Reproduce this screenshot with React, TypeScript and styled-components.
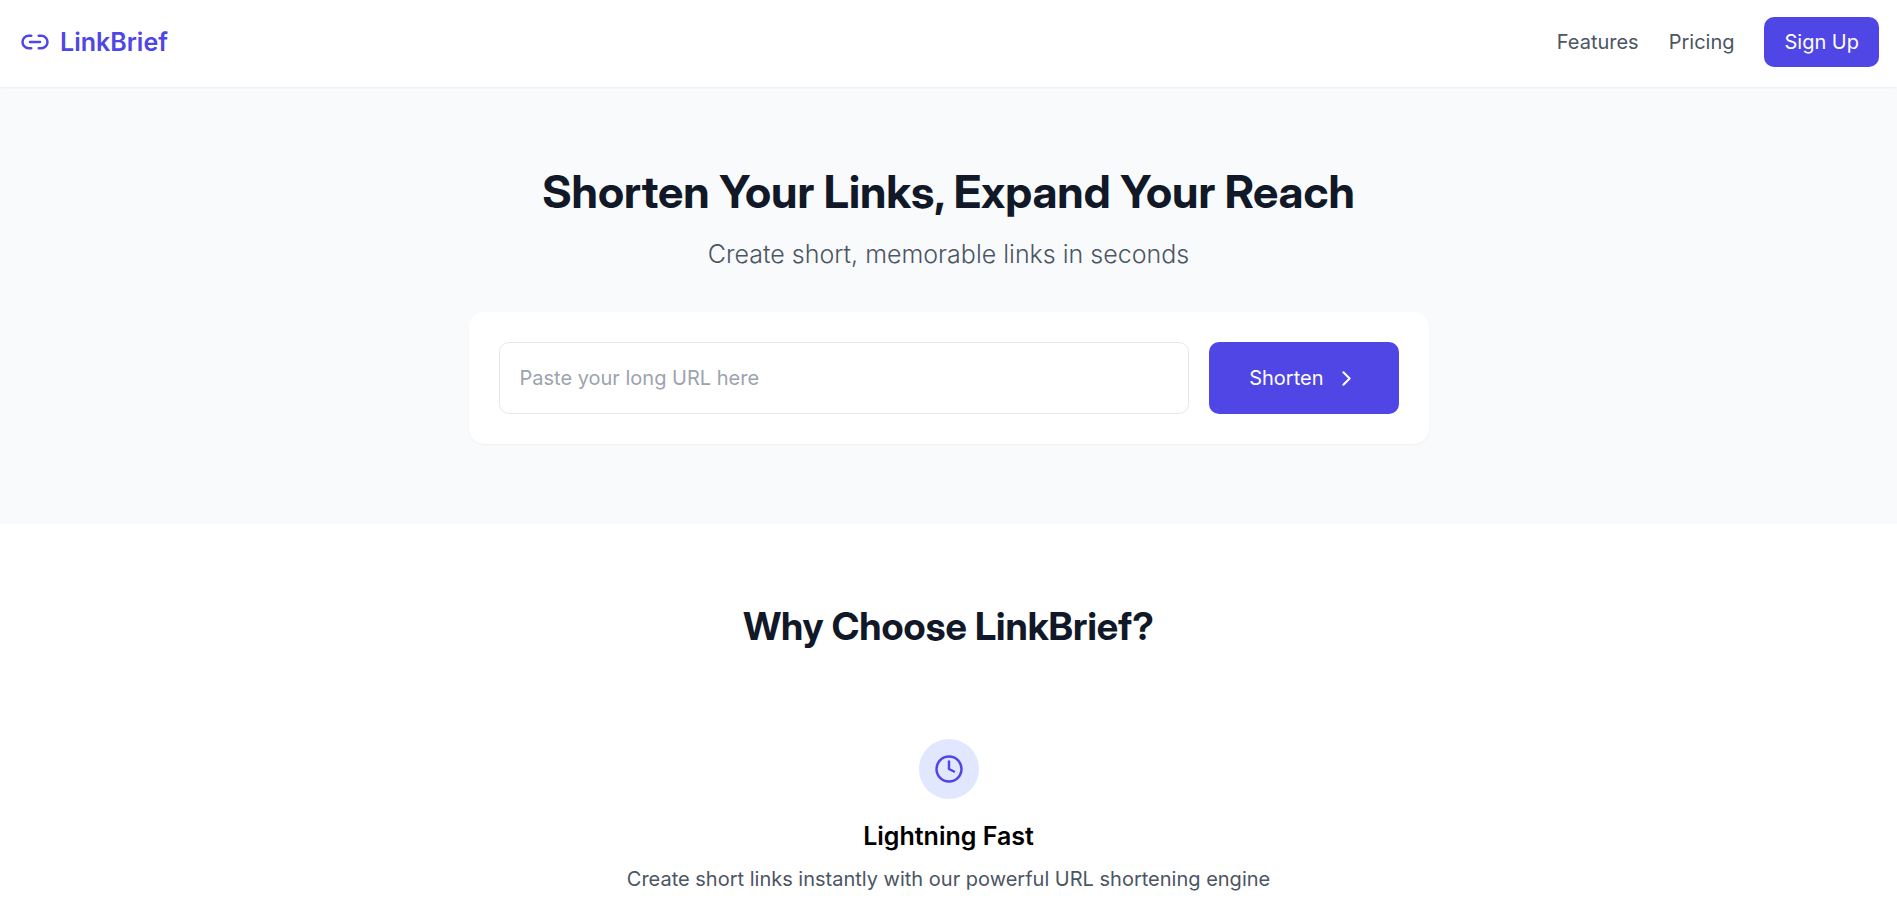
import React from "react";
import styled, { createGlobalStyle } from "styled-components";
import { ChevronRight, Clock, Link2 } from "lucide-react";

const color = {
  brand: "#4f46e5",
  brandSoft: "#e0e7ff",
  ink: "#111827",
  muted: "#4b5563",
  placeholder: "#9ca3af",
  line: "#e5e7eb",
  page: "#f9fafb",
};

const displayFont = `"Inter Display", Inter, "Liberation Sans", sans-serif`;

const GlobalStyle = createGlobalStyle`
  *, *::before, *::after { box-sizing: border-box; }
  body {
    margin: 0;
    background: #ffffff;
    color: #000000;
    font-family: Inter, "Liberation Sans", sans-serif;
    font-size: 20px;
    line-height: 30px;
  }
  h1, h2, h3, p { margin: 0; }
  button, input { font: inherit; }
`;

const Header = styled.header`
  position: relative;
  display: flex;
  align-items: center;
  justify-content: space-between;
  padding: 17px 18px 20px 20px;
  background: #ffffff;
  box-shadow: 0 1px 2px rgba(0, 0, 0, 0.05);
`;

const Brand = styled.a`
  display: flex;
  align-items: center;
  gap: 10px;
  color: ${color.brand};
  font-size: 25px;
  line-height: 35px;
  font-weight: 600;
  text-decoration: none;
`;

const Nav = styled.nav`
  display: flex;
  align-items: center;
  gap: 30px;
`;

const NavLink = styled.a`
  color: ${color.muted};
  text-decoration: none;
`;

const Button = styled.button<{ $large?: boolean }>`
  display: flex;
  align-items: center;
  gap: 10px;
  padding: ${(p) => (p.$large ? "20px 40px" : "10px 20px")};
  border: 0;
  border-radius: 10px;
  background: ${color.brand};
  color: #ffffff;
  cursor: pointer;
`;

const Hero = styled.section`
  display: flex;
  flex-direction: column;
  align-items: center;
  padding: 80px 20px;
  background: ${color.page};
  text-align: center;
`;

const Title = styled.h1`
  margin-bottom: 20px;
  color: ${color.ink};
  font-family: ${displayFont};
  font-size: 45px;
  line-height: 50px;
  font-weight: 700;
`;

const Subtitle = styled.p`
  margin-bottom: 40px;
  color: ${color.muted};
  font-size: 25px;
  line-height: 35px;
  font-weight: 350;
`;

const ShortenForm = styled.form`
  display: flex;
  gap: 20px;
  width: 100%;
  max-width: 960px;
  padding: 30px;
  border-radius: 15px;
  background: #ffffff;
  box-shadow: 0 1px 2px rgba(0, 0, 0, 0.05);
`;

const UrlInput = styled.input`
  flex: 1;
  min-width: 0;
  height: 72px;
  padding: 20px;
  border: 1px solid ${color.line};
  border-radius: 10px;
  background: #ffffff;
  color: ${color.ink};
  &::placeholder {
    color: ${color.placeholder};
    opacity: 1;
  }
`;

const Features = styled.section`
  display: flex;
  flex-direction: column;
  align-items: center;
  gap: 60px;
  padding: 80px 20px 0;
  text-align: center;
`;

const SectionTitle = styled.h2`
  color: ${color.ink};
  font-family: ${displayFont};
  font-size: 38px;
  line-height: 45px;
  font-weight: 700;
`;

const Feature = styled.article`
  display: flex;
  flex-direction: column;
  align-items: center;
  padding-top: 30px;
`;

const FeatureIcon = styled.div`
  display: flex;
  align-items: center;
  justify-content: center;
  width: 60px;
  height: 60px;
  margin-bottom: 20px;
  border-radius: 50%;
  background: ${color.brandSoft};
  color: ${color.brand};
`;

const FeatureTitle = styled.h3`
  margin-bottom: 10px;
  font-size: 25px;
  line-height: 35px;
  font-weight: 600;
`;

const FeatureText = styled.p`
  color: ${color.muted};
`;

export default function App() {
  return (
    <>
      <GlobalStyle />
      <Header>
        <Brand href="#">
          <Link2 size={30} aria-hidden />
          LinkBrief
        </Brand>
        <Nav>
          <NavLink href="#features">Features</NavLink>
          <NavLink href="#pricing">Pricing</NavLink>
          <Button type="button">Sign Up</Button>
        </Nav>
      </Header>
      <main>
        <Hero>
          <Title>Shorten Your Links, Expand Your Reach</Title>
          <Subtitle>Create short, memorable links in seconds</Subtitle>
          <ShortenForm onSubmit={(e) => e.preventDefault()}>
            <UrlInput
              type="url"
              aria-label="Long URL"
              placeholder="Paste your long URL here"
            />
            <Button type="submit" $large>
              Shorten
              <ChevronRight size={25} aria-hidden />
            </Button>
          </ShortenForm>
        </Hero>
        <Features id="features">
          <SectionTitle>Why Choose LinkBrief?</SectionTitle>
          <Feature>
            <FeatureIcon>
              <Clock size={30} aria-hidden />
            </FeatureIcon>
            <FeatureTitle>Lightning Fast</FeatureTitle>
            <FeatureText>
              Create short links instantly with our powerful URL shortening engine
            </FeatureText>
          </Feature>
        </Features>
      </main>
    </>
  );
}
